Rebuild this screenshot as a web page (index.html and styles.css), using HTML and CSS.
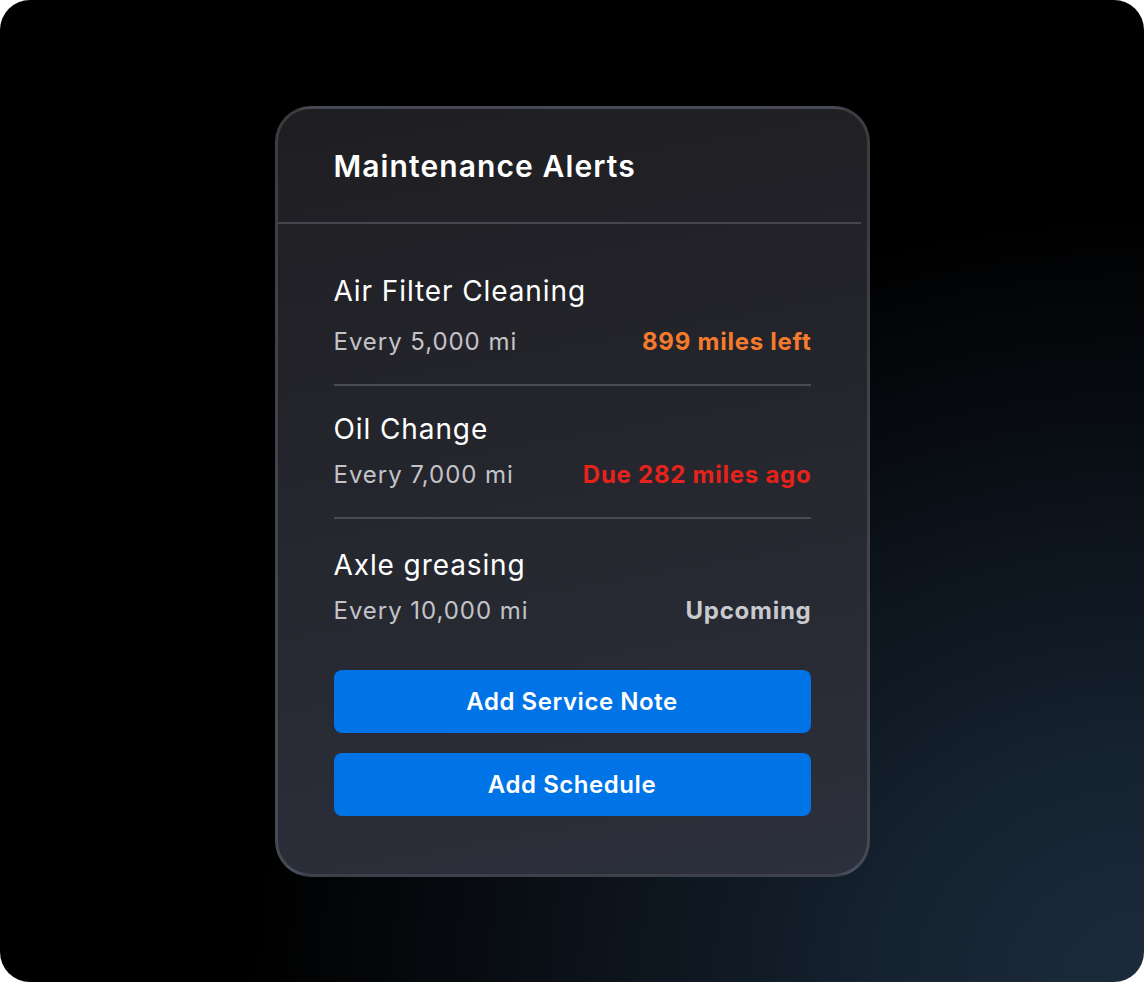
FILE: index.html
```html
<!DOCTYPE html>
<html lang="en">
<head>
  <meta charset="UTF-8">
  <meta name="viewport" content="width=device-width, initial-scale=1.0">
  <title>Maintenance Alerts</title>
  <link rel="stylesheet" href="styles.css">
</head>
<body>

<div class="frame">
  <div class="alerts-card">
    <div class="alerts-header">
      <h2>Maintenance Alerts</h2>
    </div>

    <div class="alerts-body">
      <div class="alert-item first">
        <div class="alert-title">Air Filter Cleaning</div>
        <div class="alert-row">
          <span class="alert-interval">Every 5,000 mi</span>
          <span class="alert-status warn">899 miles left</span>
        </div>
      </div>

      <div class="alert-item">
        <div class="alert-title">Oil Change</div>
        <div class="alert-row">
          <span class="alert-interval">Every 7,000 mi</span>
          <span class="alert-status overdue">Due 282 miles ago</span>
        </div>
      </div>

      <div class="alert-item last">
        <div class="alert-title">Axle greasing</div>
        <div class="alert-row">
          <span class="alert-interval">Every 10,000 mi</span>
          <span class="alert-status upcoming">Upcoming</span>
        </div>
      </div>

      <div class="alert-actions">
        <button type="button">Add Service Note</button>
        <button type="button">Add Schedule</button>
      </div>
    </div>
  </div>
</div>

</body>
</html>
```

FILE: styles.css
```css
body {
  margin: 0;
  background: #ffffff;
  font-family: Inter, "Noto Sans", sans-serif;
}

.frame {
  width: 1144px;
  height: 982px;
  border-radius: 30px;
  overflow: hidden;
  background:
    radial-gradient(ellipse 1050px 900px at 100% 100%, #1c2b3b 0%, #152230 25%, #0b1118 55%, rgba(0, 0, 0, 0) 85%),
    #000;
  display: flex;
  justify-content: center;
  align-items: center;
}

.alerts-card {
  width: 589px;
  height: 765px;
  border: 3px solid rgba(255, 255, 255, 0.13);
  border-bottom-color: rgba(190, 205, 240, 0.2);
  border-radius: 36px;
  background: linear-gradient(170deg, #1e1e22 0%, #25262d 45%, #2c303c 100%);
  color: #fff;
}

.alerts-header {
  height: 115px;
  box-sizing: border-box;
  padding: 39px 56px 0;
  border-bottom: 2px solid #46474e;
  margin-right: 6px;
}

.alerts-header h2 {
  margin: 0;
  font-size: 30px;
  line-height: 36px;
  font-weight: 600;
  letter-spacing: 1.1px;
}

.alerts-body {
  padding: 0 56px;
}

.alert-item {
  padding: 26px 0 27px;
  border-bottom: 2px solid #4a4c55;
}

.alert-item.first {
  padding-top: 50px;
}

.alert-item.last {
  border-bottom: none;
  padding-top: 29px;
  padding-bottom: 0;
}

.alert-title {
  font-size: 28px;
  line-height: 34px;
  font-weight: 400;
  letter-spacing: 0.9px;
}

.alert-row {
  display: flex;
  justify-content: space-between;
  align-items: baseline;
  margin-top: 14px;
}

.alert-item.first .alert-row {
  margin-top: 19px;
}

.alert-interval {
  font-size: 24px;
  line-height: 30px;
  color: #c3c3c8;
  letter-spacing: 0.95px;
}

.alert-status {
  font-size: 24px;
  line-height: 30px;
  font-weight: 700;
  letter-spacing: 0.75px;
  margin-right: -1px;
}

.alert-status.warn {
  color: #f57b2c;
}

.alert-status.overdue {
  color: #e5231b;
}

.alert-status.upcoming {
  color: #c9cace;
}

.alert-actions {
  display: flex;
  flex-direction: column;
  gap: 20px;
  margin-top: 44px;
}

.alert-actions button {
  height: 63px;
  border: none;
  border-radius: 8px;
  background: #0073e6;
  color: #fff;
  font-family: inherit;
  font-size: 24px;
  font-weight: 600;
  letter-spacing: 0.55px;
  cursor: pointer;
}
```
